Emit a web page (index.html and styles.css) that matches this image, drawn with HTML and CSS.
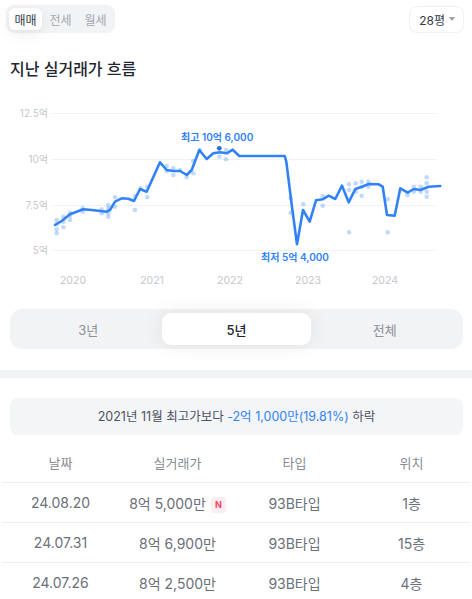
FILE: index.html
```html
<!DOCTYPE html>
<html lang="ko">

<head>
    <meta charset="UTF-8">
    <meta name="viewport" content="width=device-width, initial-scale=1.0">
    <title>실거래가</title>
    <link rel="stylesheet" href="styles.css">
</head>

<body>

    <div class="top-bar">
        <div class="deal-tabs">
            <button class="deal-tab active">매매</button>
            <button class="deal-tab">전세</button>
            <button class="deal-tab">월세</button>
        </div>
        <button class="size-select">28평 <span class="caret"></span></button>
    </div>

    <h2 class="title">지난 실거래가 흐름</h2>

    <svg class="chart" viewBox="0 96 472 200" width="472" height="200">
        <!-- grid -->
        <g class="grid">
            <line x1="53" y1="113.5" x2="435" y2="113.5" />
            <line x1="53" y1="159.5" x2="435" y2="159.5" />
            <line x1="53" y1="205.5" x2="435" y2="205.5" />
            <line x1="53" y1="250.5" x2="435" y2="250.5" />
        </g>
        <g class="axis-y">
            <text x="48" y="117">12.5억</text>
            <text x="48" y="163">10억</text>
            <text x="48" y="209">7.5억</text>
            <text x="48" y="254">5억</text>
        </g>
        <g class="axis-x">
            <text x="73" y="284">2020</text>
            <text x="152" y="284">2021</text>
            <text x="230" y="284">2022</text>
            <text x="308" y="284">2023</text>
            <text x="385" y="284">2024</text>
        </g>

        <!-- deals -->
        <g class="dots">
            <circle cx="56.7" cy="220" r="2.3" /><circle cx="56.7" cy="224" r="2.3" />
            <circle cx="56.7" cy="229.3" r="2.3" /><circle cx="56.7" cy="233.3" r="2.3" />
            <circle cx="63.3" cy="216.7" r="2.3" /><circle cx="63.3" cy="221.7" r="2.3" />
            <circle cx="63.3" cy="227.3" r="2.3" /><circle cx="70" cy="212.7" r="2.3" />
            <circle cx="70" cy="216" r="2.3" /><circle cx="70" cy="220" r="2.3" />
            <circle cx="82.7" cy="208.3" r="2.3" /><circle cx="82.7" cy="211.7" r="2.3" />
            <circle cx="101.7" cy="209.3" r="2.3" /><circle cx="101.7" cy="213.3" r="2.3" />
            <circle cx="108.3" cy="205" r="2.3" /><circle cx="108.3" cy="208.3" r="2.3" />
            <circle cx="108.3" cy="213.3" r="2.3" /><circle cx="108.3" cy="216.7" r="2.3" />
            <circle cx="115" cy="197.3" r="2.3" /><circle cx="115" cy="206.7" r="2.3" />
            <circle cx="135" cy="196" r="2.3" /><circle cx="135" cy="210" r="2.3" />
            <circle cx="140.7" cy="188.3" r="2.3" /><circle cx="147.3" cy="186.7" r="2.3" />
            <circle cx="147.3" cy="197.3" r="2.3" /><circle cx="166.7" cy="166" r="2.3" />
            <circle cx="166.7" cy="171" r="2.3" /><circle cx="173.3" cy="168.3" r="2.3" />
            <circle cx="173.3" cy="175" r="2.3" /><circle cx="180" cy="170" r="2.3" />
            <circle cx="186.7" cy="177.3" r="2.3" /><circle cx="193.3" cy="161" r="2.3" />
            <circle cx="193.3" cy="173.3" r="2.3" /><circle cx="200" cy="150" r="2.3" />
            <circle cx="219.3" cy="156.7" r="2.3" /><circle cx="226" cy="150" r="2.3" />
            <circle cx="226" cy="159.3" r="2.3" /><circle cx="290.7" cy="198.3" r="2.3" />
            <circle cx="290.7" cy="212.7" r="2.3" /><circle cx="303.3" cy="204.3" r="2.3" />
            <circle cx="322.7" cy="196" r="2.3" /><circle cx="322.7" cy="205.7" r="2.3" />
            <circle cx="349" cy="184.3" r="2.3" /><circle cx="349" cy="190" r="2.3" />
            <circle cx="349" cy="232.3" r="2.3" /><circle cx="355.7" cy="183.3" r="2.3" />
            <circle cx="355.7" cy="191.7" r="2.3" /><circle cx="361.7" cy="181.7" r="2.3" />
            <circle cx="361.7" cy="186.7" r="2.3" /><circle cx="361.7" cy="195.7" r="2.3" />
            <circle cx="368.3" cy="181.7" r="2.3" /><circle cx="368.3" cy="186.7" r="2.3" />
            <circle cx="387.7" cy="199.3" r="2.3" /><circle cx="387.7" cy="232.3" r="2.3" />
            <circle cx="407.3" cy="195" r="2.3" /><circle cx="414" cy="186.7" r="2.3" />
            <circle cx="414" cy="191.7" r="2.3" /><circle cx="420.7" cy="186.7" r="2.3" />
            <circle cx="420.7" cy="191.7" r="2.3" /><circle cx="426.7" cy="177.3" r="2.3" />
            <circle cx="426.7" cy="183.3" r="2.3" /><circle cx="426.7" cy="191.7" r="2.3" />
            <circle cx="426.7" cy="196.7" r="2.3" />
        </g>

        <polyline class="trend" points="55,225 61.7,221 70,214.3 83.3,209.3 91.7,210 106.7,211.7 110,210 115,201.7 121.7,198.3 128.3,198.7 134,201 140,189 146.7,191.7 160,162.3 166.7,170 173.3,171 180,171 186.7,175 191.7,170 199.3,150 206.7,159 213.3,153.3 220,152.3 226.7,153.3 232.7,149.7 239.3,156 284.7,156 286.3,161.7 291.3,201.7 297,244.3 303,210 309.7,221.7 316,200.3 322.7,199.3 328.7,195.7 335.3,199 342,185.7 348.7,202.3 355.3,189 362,186.7 368.7,184 378.7,184.3 382.7,186.7 387,215 394.7,215.7 400.3,188.3 407.7,192.7 413.7,189 420.3,190 428.7,186.7 440.3,186" />

        <circle class="peak" cx="219.3" cy="148.3" r="2.4" />
        <text class="mark" x="181" y="140.5">최고 10억 6,000</text>
        <text class="mark" x="261" y="260.5">최저 5억 4,000</text>
    </svg>

    <div class="period-tabs">
        <button class="period-tab">3년</button>
        <button class="period-tab active">5년</button>
        <button class="period-tab">전체</button>
    </div>

    <div class="divider"></div>

    <div class="summary">
        2021년 11월 최고가보다 <span class="drop">-2억 1,000만(19.81%)</span> 하락
    </div>

    <table class="deals">
        <thead>
            <tr>
                <th>날짜</th>
                <th>실거래가</th>
                <th>타입</th>
                <th>위치</th>
            </tr>
        </thead>
        <tbody>
            <tr>
                <td>24.08.20</td>
                <td>8억 5,000만<span class="badge-new">N</span></td>
                <td>93B타입</td>
                <td>1층</td>
            </tr>
            <tr>
                <td>24.07.31</td>
                <td>8억 6,900만</td>
                <td>93B타입</td>
                <td>15층</td>
            </tr>
            <tr>
                <td>24.07.26</td>
                <td>8억 2,500만</td>
                <td>93B타입</td>
                <td>4층</td>
            </tr>
        </tbody>
    </table>

</body>

</html>
```

FILE: styles.css
```css
body {
    margin: 0;
    background: #ffffff;
    font-family: 'Inter', 'Noto Sans CJK KR', sans-serif;
    color: #333;
    width: 472px;
    overflow: hidden;
}

button {
    font-family: inherit;
    border: none;
    background: none;
    padding: 0;
    cursor: pointer;
}

.top-bar {
    display: flex;
    justify-content: space-between;
    align-items: center;
    padding: 5px 8px 0 6px;
}

.deal-tabs {
    display: flex;
    gap: 2px;
    padding: 3px;
    background: #f2f3f5;
    border-radius: 8px;
}

.deal-tab {
    width: 33px;
    height: 22px;
    border-radius: 6px;
    font-size: 12px;
    color: #a3a8b0;
}

.deal-tab.active {
    background: #ffffff;
    color: #333a45;
    box-shadow: 0 4px 14px rgba(0, 0, 0, 0.07);
}

.size-select {
    display: flex;
    align-items: center;
    gap: 4px;
    height: 27px;
    padding: 0 8px 0 9px;
    border: 1px solid #eef0f2;
    border-radius: 8px;
    font-size: 12px;
    color: #333a45;
    background: #ffffff;
}

.caret {
    width: 0;
    height: 0;
    border-left: 3.5px solid transparent;
    border-right: 3.5px solid transparent;
    border-top: 4px solid #9aa0a8;
}

.title {
    margin: 24px 0 0 10px;
    font-size: 16px;
    line-height: 24px;
    font-weight: 500;
    color: #1f2633;
}

.chart {
    display: block;
    margin-top: 15px;
}

.grid line {
    stroke: #f0f1f3;
    stroke-width: 1;
}

.axis-y text {
    font-size: 10px;
    fill: #c3c7cd;
    text-anchor: end;
}

.axis-x text {
    font-size: 10.5px;
    fill: #c3c7cd;
    text-anchor: middle;
}

.dots circle {
    fill: #3182f6;
    fill-opacity: 0.3;
}

.trend {
    fill: none;
    stroke: #3182f6;
    stroke-width: 2.6;
    stroke-linejoin: round;
    stroke-linecap: round;
}

.peak {
    fill: #2a6fd6;
}

.mark {
    font-size: 10px;
    font-weight: 600;
    fill: #3182f6;
}

.period-tabs {
    display: flex;
    margin: 13px 9px 0 10px;
    padding: 4px;
    background: #f2f3f5;
    border-radius: 12px;
}

.period-tab {
    flex: 1;
    height: 32px;
    border-radius: 9px;
    font-size: 13px;
    color: #8b9099;
}

.period-tab.active {
    background: #ffffff;
    color: #1f2633;
    font-weight: 500;
    box-shadow: 0 0 22px rgba(0, 0, 0, 0.08);
}

.divider {
    height: 8px;
    margin-top: 21px;
    background: #f2f3f5;
}

.summary {
    margin: 20px 9px 0 10px;
    height: 37px;
    line-height: 37px;
    background: #f4f5f7;
    border-radius: 8px;
    text-align: center;
    font-size: 12.5px;
    color: #4b5260;
}

.drop {
    color: #3182f6;
}

.deals {
    width: 468px;
    margin: 8px 2px 0;
    border-collapse: collapse;
    table-layout: fixed;
}

.deals th,
.deals td {
    height: 39px;
    padding: 0;
    text-align: center;
    border-bottom: 1px solid #eef0f2;
}

.deals th {
    font-size: 13px;
    font-weight: 400;
    color: #868b93;
}

.deals td {
    font-size: 14px;
    color: #6b7079;
}

.deals tbody tr:last-child td {
    border-bottom: none;
}

.badge-new {
    display: inline-block;
    vertical-align: 1px;
    width: 15px;
    height: 16px;
    line-height: 16px;
    margin-left: 5px;
    border-radius: 3px;
    background: #feedf0;
    color: #f0436a;
    font-size: 9px;
    font-weight: 700;
}
```
